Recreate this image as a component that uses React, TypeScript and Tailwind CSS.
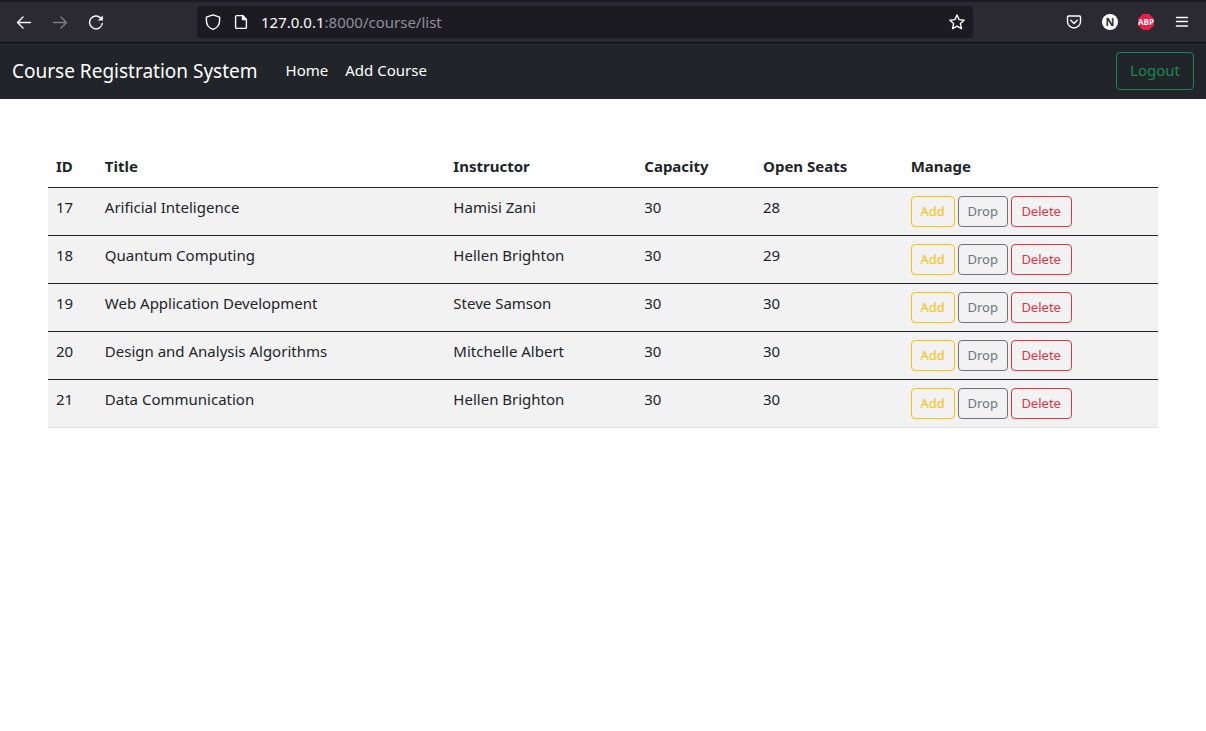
import type { ReactNode } from "react";

type Course = {
  id: number;
  title: string;
  instructor: string;
  capacity: number;
  openSeats: number;
};

const courses: Course[] = [
  { id: 17, title: "Arificial Inteligence", instructor: "Hamisi Zani", capacity: 30, openSeats: 28 },
  { id: 18, title: "Quantum Computing", instructor: "Hellen Brighton", capacity: 30, openSeats: 29 },
  { id: 19, title: "Web Application Development", instructor: "Steve Samson", capacity: 30, openSeats: 30 },
  { id: 20, title: "Design and Analysis Algorithms", instructor: "Mitchelle Albert", capacity: 30, openSeats: 30 },
  { id: 21, title: "Data Communication", instructor: "Hellen Brighton", capacity: 30, openSeats: 30 },
];

const columns = [
  { label: "ID", width: "w-[4.4%]" },
  { label: "Title", width: "w-[31.4%]" },
  { label: "Instructor", width: "w-[17.2%]" },
  { label: "Capacity", width: "w-[10.7%]" },
  { label: "Open Seats", width: "w-[13.3%]" },
  { label: "Manage", width: "w-[23%]" },
];

const actions = [
  { label: "Add", style: "w-11 border-[#ffc107] text-[#ffc107]" },
  { label: "Drop", style: "w-[50px] border-[#6c757d] text-[#6c757d]" },
  { label: "Delete", style: "w-[61px] border-[#dc3545] text-[#dc3545]" },
];

function ToolButton({ label, disabled, children }: { label: string; disabled?: boolean; children: ReactNode }) {
  return (
    <button
      type="button"
      aria-label={label}
      disabled={disabled}
      className="flex size-4 items-center justify-center text-[#fbfbfe] disabled:opacity-40"
    >
      <svg
        viewBox="0 0 16 16"
        className="size-4"
        fill="none"
        stroke="currentColor"
        strokeWidth="1.4"
        strokeLinecap="round"
        strokeLinejoin="round"
      >
        {children}
      </svg>
    </button>
  );
}

function BrowserBar() {
  return (
    <div className="flex h-[43px] items-center border-t-2 border-b border-t-[#1c1b22] border-b-[#0c0c0d] bg-[#2b2a33] px-4">
      <div className="flex w-[181px] shrink-0 items-center gap-5">
        <ToolButton label="Back">
          <path d="M14.5 8.5H1.500M7 3 1.500 8.500 7 14" />
        </ToolButton>
        <ToolButton label="Forward" disabled>
          <path d="M1.500 8.500h13M9 3l5.500 5.500L9 14" />
        </ToolButton>
        <ToolButton label="Reload">
          <path d="M14.300 9.500A6.400 6.400 0 1 1 12.600 4" />
          <path d="M14.900 1.400v5.200H9.700z" fill="currentColor" stroke="none" />
        </ToolButton>
      </div>
      <div className="flex h-8 max-w-[776px] grow items-center gap-3 rounded bg-[#1c1b22] px-2">
        <ToolButton label="Site protection">
          <path d="M8 .8 14.600 3.200V6.500C14.600 10.800 12 14 8 15.400 4 14 1.400 10.800 1.400 6.500V3.200z" />
        </ToolButton>
        <ToolButton label="Page information">
          <path d="M9.500 1.600H3.600a1 1 0 0 0-1 1v10.800a1 1 0 0 0 1 1h8.800a1 1 0 0 0 1-1V5.500z" />
          <path d="M9.500 1.600v3.900h3.900z" fill="currentColor" />
        </ToolButton>
        <div className="grow text-[15px] leading-5 text-[#8f8f9d]">
          <span className="text-[#fbfbfe]">127.0.0.1</span>:8000/course/list
        </div>
        <ToolButton label="Bookmark this page">
          <path d="m8 1 2.100 4.600 5 .6-3.700 3.400 1 5L8 12.100l-4.400 2.500 1-5L.9 6.200l5-.6z" />
        </ToolButton>
      </div>
      <div className="ml-auto flex items-center gap-5">
        <ToolButton label="Save to Pocket">
          <path d="M2.500 2h11a1 1 0 0 1 1 1v4.500a6.500 6.500 0 0 1-13 0V3a1 1 0 0 1 1-1z" />
          <path d="M4.800 6.300 8 9.400l3.200-3.100" />
        </ToolButton>
        <button
          type="button"
          className="flex size-4 items-center justify-center rounded-full bg-white text-[11px] leading-4 font-bold text-[#2b2a33]"
        >
          N
        </button>
        <button
          type="button"
          className="flex size-4 items-center justify-center bg-[#ed1e45] font-['Liberation_Sans_Narrow','Open_Sans',sans-serif] text-[8px] leading-4 font-bold text-white [clip-path:polygon(30%_0,70%_0,100%_30%,100%_70%,70%_100%,30%_100%,0_70%,0_30%)]"
        >
          ABP
        </button>
        <ToolButton label="Open menu">
          <path d="M2.500 3.500h11M2.500 7.500h11M2.500 12h11" />
        </ToolButton>
      </div>
    </div>
  );
}

function Navbar() {
  return (
    <nav className="flex h-14 items-center bg-[#212529] px-3 text-white">
      <a href="#" className="mr-7 text-[19px] leading-[30px]">
        Course Registration System
      </a>
      <div className="flex gap-[17px] pb-0.5 text-[15px] leading-6">
        <a href="#">Home</a>
        <a href="#">Add Course</a>
      </div>
      <button
        type="button"
        className="ml-auto h-[38px] rounded border border-[#198754] px-[13px] pb-0.5 text-[15px] leading-6 text-[#198754]"
      >
        Logout
      </button>
    </nav>
  );
}

function CourseTable() {
  return (
    <table className="w-full table-fixed border-collapse text-left text-[15px] leading-[22px]">
      <thead>
        <tr className="border-b border-[#212529]">
          {columns.map((column) => (
            <th key={column.label} scope="col" className={`px-2 pt-2 pb-2.5 font-bold ${column.width}`}>
              {column.label}
            </th>
          ))}
        </tr>
      </thead>
      <tbody>
        {courses.map((course) => (
          <tr key={course.id} className="border-b border-[#212529] bg-[#f2f2f2] align-top last:border-[#dee2e6]">
            <td className="p-2">{course.id}</td>
            <td className="p-2">{course.title}</td>
            <td className="p-2">{course.instructor}</td>
            <td className="p-2">{course.capacity}</td>
            <td className="p-2">{course.openSeats}</td>
            <td className="p-2">
              <div className="flex gap-[3px]">
                {actions.map((action) => (
                  <button
                    key={action.label}
                    type="button"
                    className={`h-[31px] rounded border pb-px text-[13px] leading-5 ${action.style}`}
                  >
                    {action.label}
                  </button>
                ))}
              </div>
            </td>
          </tr>
        ))}
      </tbody>
    </table>
  );
}

export default function App() {
  return (
    <div className="min-h-screen bg-white font-['Noto_Sans',sans-serif] text-[#212529]">
      <BrowserBar />
      <Navbar />
      <main className="p-12">
        <CourseTable />
      </main>
    </div>
  );
}
